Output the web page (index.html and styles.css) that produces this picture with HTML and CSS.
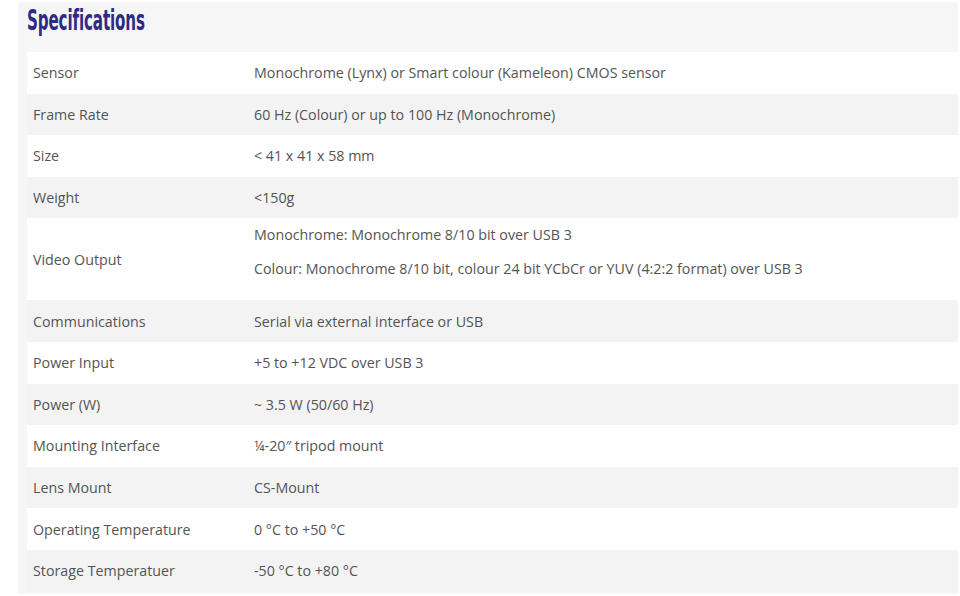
FILE: index.html
```html
<!DOCTYPE html>
<html>
<head>
<meta charset="utf-8">
<link rel="stylesheet" href="styles.css">
</head>
<body>
<section class="specs">
  <h2 class="title"><span>Specifications</span></h2>
  <table class="spec-table">
    <colgroup><col class="col-label"><col></colgroup>
    <tbody>
      <tr><td>Sensor</td><td>Monochrome (Lynx) or Smart colour (Kameleon) CMOS sensor</td></tr>
      <tr><td>Frame Rate</td><td>60 Hz (Colour) or up to 100 Hz (Monochrome)</td></tr>
      <tr><td>Size</td><td>&lt; 41 x 41 x 58 mm</td></tr>
      <tr><td>Weight</td><td>&lt;150g</td></tr>
      <tr class="tall"><td>Video Output</td><td><p>Monochrome: Monochrome 8/10 bit over USB 3</p><p>Colour: Monochrome 8/10 bit, colour 24 bit YCbCr or YUV (4:2:2 format) over USB 3</p></td></tr>
      <tr><td>Communications</td><td>Serial via external interface or USB</td></tr>
      <tr><td>Power Input</td><td>+5 to +12 VDC over USB 3</td></tr>
      <tr><td>Power (W)</td><td>~ 3.5 W (50/60 Hz)</td></tr>
      <tr><td>Mounting Interface</td><td>¼-20″ tripod mount</td></tr>
      <tr><td>Lens Mount</td><td>CS-Mount</td></tr>
      <tr><td>Operating Temperature</td><td>0 °C to +50 °C</td></tr>
      <tr><td>Storage Temperatuer</td><td>-50 °C to +80 °C</td></tr>
    </tbody>
  </table>
</section>
</body>
</html>
```

FILE: styles.css
```css
html, body {
  margin: 0;
  padding: 0;
  background: #ffffff;
}
body {
  padding: 2px 2px 0 18px;
  font-family: "Open Sans", "Noto Sans", sans-serif;
}
.specs {
  background: #f6f6f6;
  padding: 0 0 3px 9px;
  height: 592px;
  box-sizing: border-box;
}
.title {
  margin: 0;
  height: 50px;
  padding-top: 3px;
  box-sizing: border-box;
  font-family: "DejaVu Sans Condensed", "DejaVu Sans", sans-serif;
  font-stretch: condensed;
  font-weight: bold;
  font-size: 28px;
  line-height: 32px;
  color: #2e2a86;
}
.title span {
  display: inline-block;
  transform: scaleX(0.6);
  transform-origin: left center;
  letter-spacing: -0.2px;
}
.spec-table {
  width: 100%;
  border-collapse: collapse;
  table-layout: fixed;
  font-size: 14.25px;
  color: #545454;
}
.col-label { width: 221px; }
.spec-table td {
  padding: 0 6px;
  height: 41.6px;
  vertical-align: middle;
}
.spec-table tr:nth-child(odd) td { background: #ffffff; }
.spec-table tr:nth-child(even) td { background: #f3f3f3; }
.spec-table tr.tall td { height: 68px; padding-bottom: 14px; }
.spec-table tr.tall td:first-child { height: 82px; padding-bottom: 0; }
.spec-table p { margin: 0; line-height: 20px; }
.spec-table p + p { margin-top: 14px; }
```
